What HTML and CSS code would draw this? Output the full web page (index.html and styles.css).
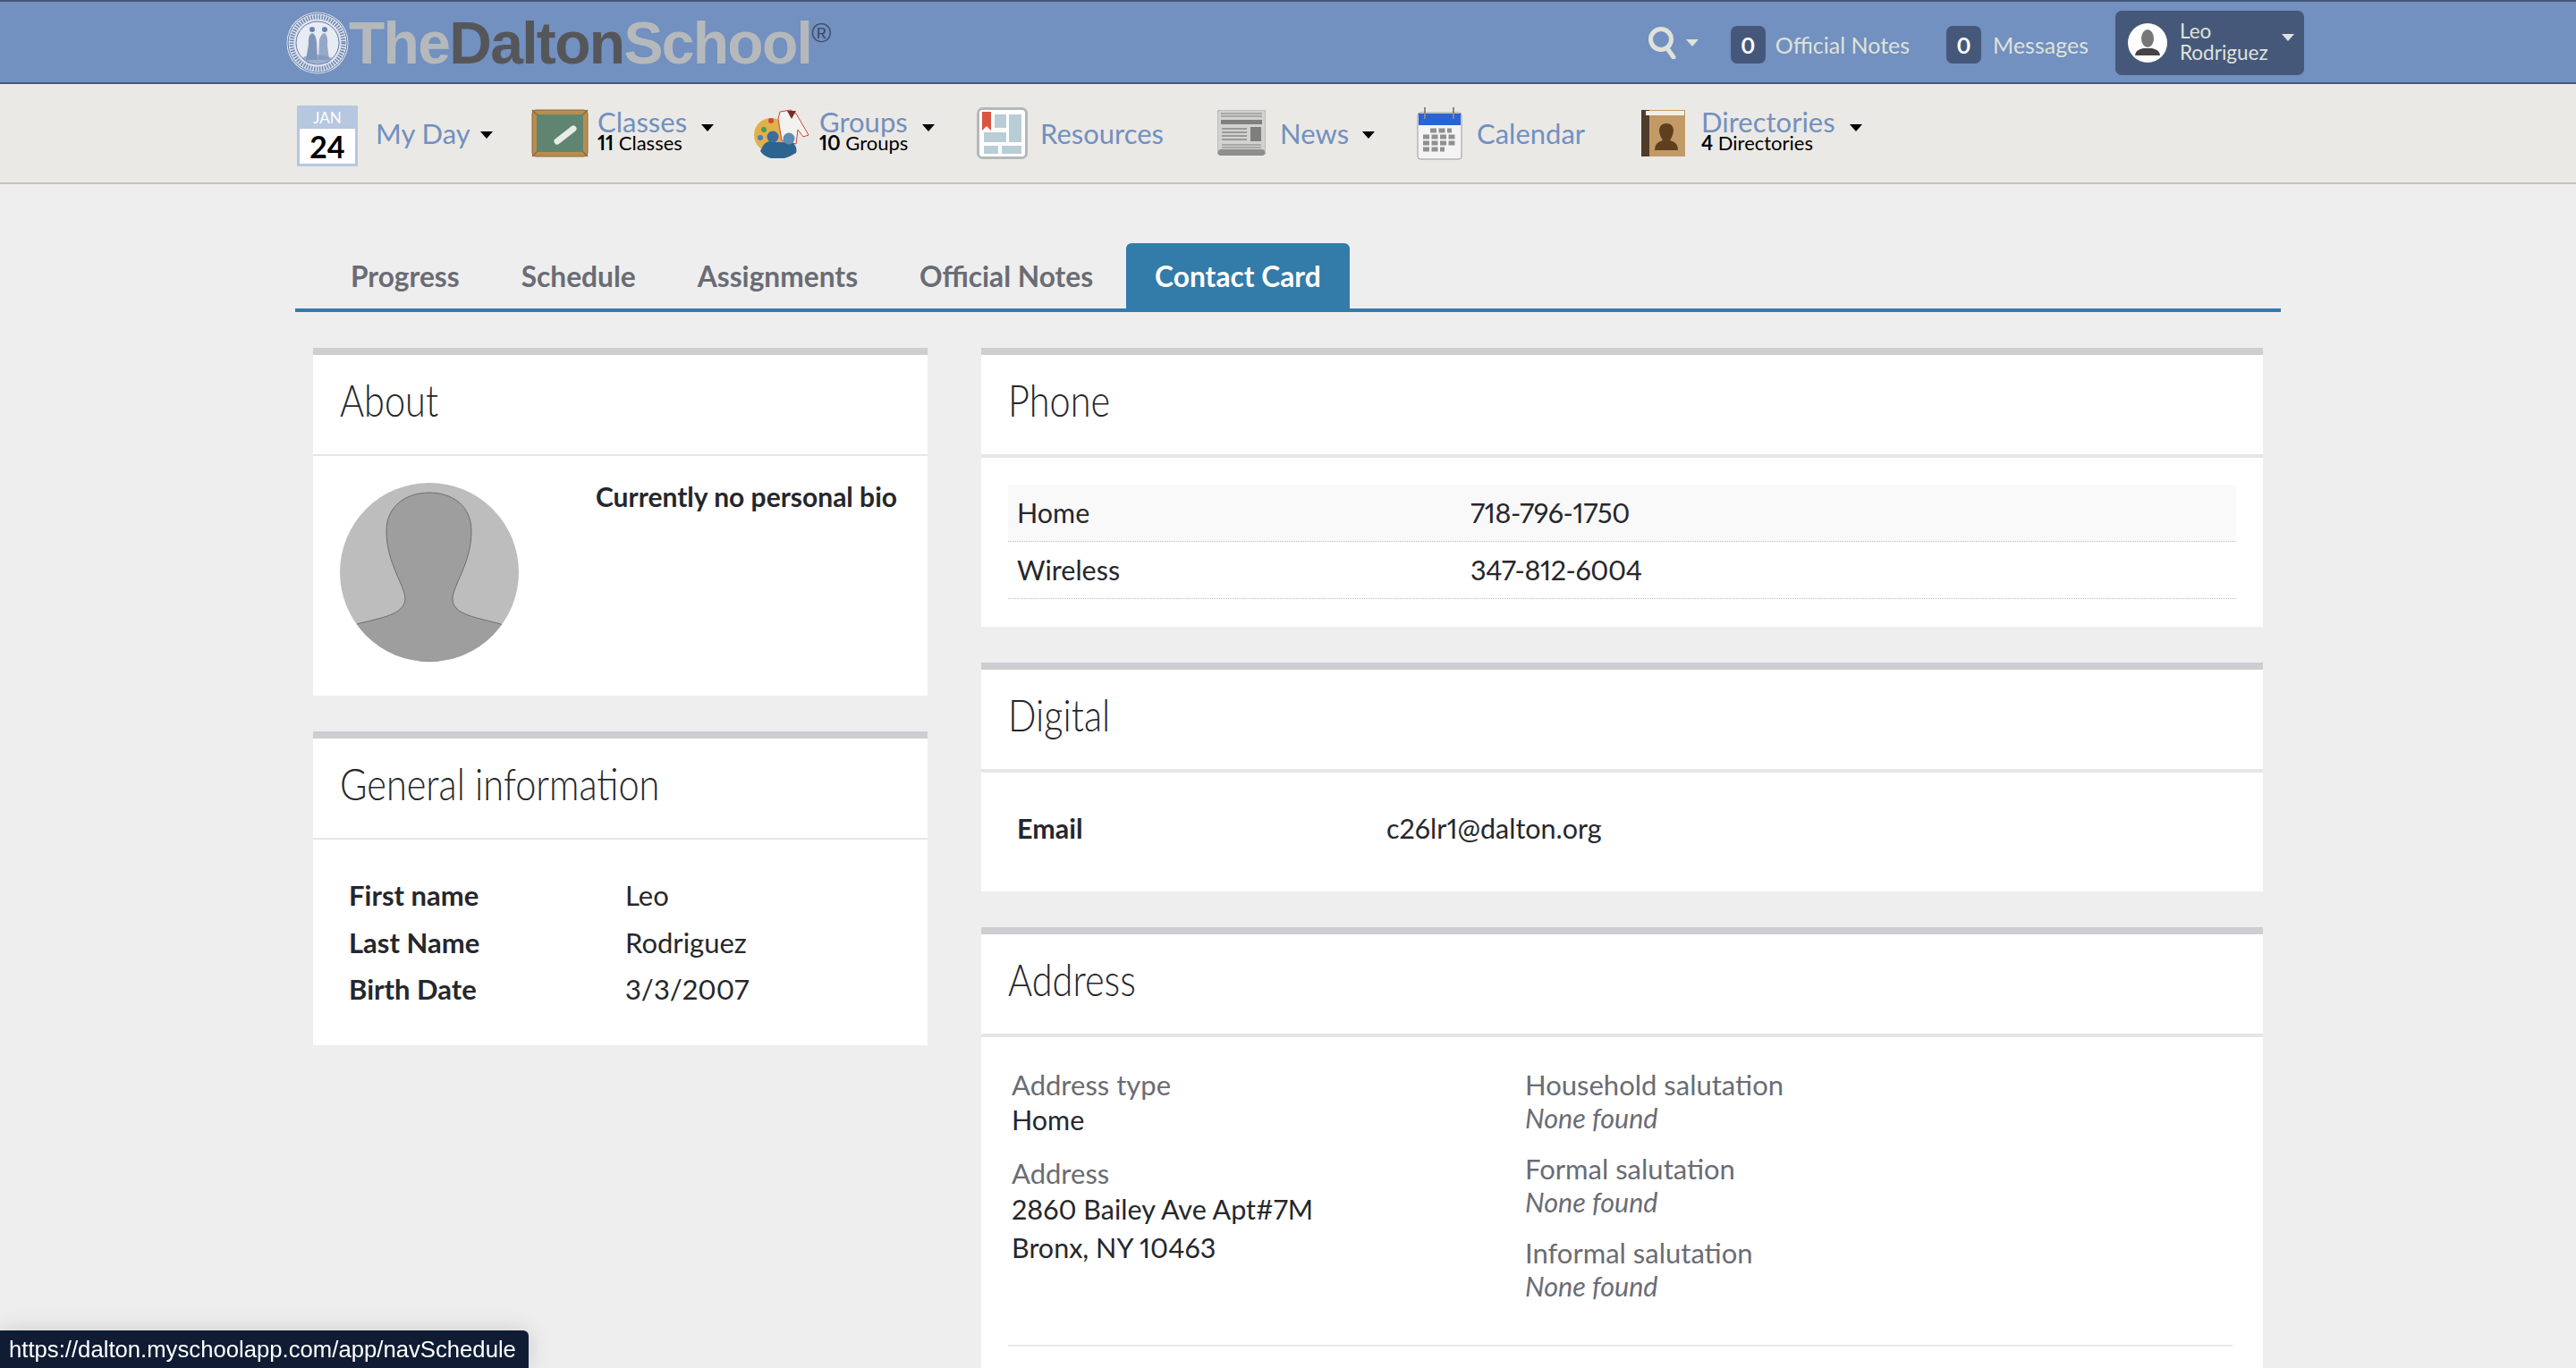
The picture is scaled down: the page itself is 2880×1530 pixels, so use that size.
FILE: index.html
```html
<!doctype html>
<html lang="en">
  <head>
    <meta charset="UTF-8" />
    <title>Contact Card</title>
    <link rel="stylesheet" href="styles.css">
  </head>
  <body>
    <!-- Top bar -->
    <header class="topbar">
      <div class="logo">
        <svg class="seal" viewBox="0 0 70 70">
          <circle cx="35" cy="35" r="34.5" fill="#dfe4ee" />
          <circle cx="35" cy="35" r="33" fill="none" stroke="#5f7aa8" stroke-width="1" />
          <circle cx="35" cy="35" r="29" fill="none" stroke="#6a84ae" stroke-width="5" stroke-dasharray="1.5 1.5" />
          <circle cx="35" cy="35" r="24" fill="#e8ebf2" stroke="#5f7aa8" stroke-width="1" />
          <path d="M22 54 L25 36 Q24 26 29 24 Q33 25 34 34 L35 54 Z" fill="#7f96bb" />
          <path d="M36 54 L37 32 Q39 24 43 24 Q47 27 46 38 L48 54 Z" fill="#95a8c8" />
          <path d="M18 52 Q28 44 52 52 L46 58 L24 58 Z" fill="#7f96bb" opacity="0.7" />
          <circle cx="29" cy="20" r="3" fill="#6a84ae" />
          <circle cx="43" cy="20" r="3" fill="#6a84ae" />
        </svg>
        <span class="logo-word">The<b>Dalton</b>School</span><span class="logo-reg">®</span>
      </div>
      <div class="top-right">
        <svg class="search" viewBox="0 0 32 36">
          <circle cx="14" cy="14" r="11.5" fill="none" stroke="#dfe2da" stroke-width="5" />
          <path d="M21 24 L28 34" stroke="#dfe2da" stroke-width="5" stroke-linecap="round" />
        </svg>
        <span class="caret caret-light search-caret"></span>
        <span class="badge">0</span><span class="top-link notes-link">Official Notes</span>
        <span class="badge">0</span><span class="top-link">Messages</span>
        <div class="user-box">
          <svg class="user-pic" viewBox="0 0 44 44">
            <circle cx="22" cy="22" r="22" fill="#fff" />
            <ellipse cx="22" cy="17" rx="7" ry="10" fill="#777" />
            <path d="M8 36 Q8 30 17 28 L27 28 Q36 30 36 36 Z" fill="#444" />
          </svg>
          <div class="user-name">Leo<br />Rodriguez</div>
          <span class="caret caret-light user-caret"></span>
        </div>
      </div>
    </header>

    <!-- Main nav -->
    <nav class="mainnav">
      <div class="nav-item myday">
        <div class="cal-tile">
          <div class="cal-month">JAN</div>
          <div class="cal-day">24</div>
        </div>
        <span class="nav-label">My Day</span>
        <span class="caret"></span>
      </div>
      <div class="nav-item classes">
        <svg class="nav-icon" width="64" height="54" viewBox="0 0 64 54">
          <rect x="1" y="1" width="62" height="52" rx="4" fill="#b98d4c" stroke="#8f6a3e" />
          <path d="M1 1L7 7M63 1L57 7M1 53L7 47M63 53L57 47" stroke="#8f6a3e" stroke-width="1.5" />
          <rect x="6" y="6" width="52" height="42" fill="#5f8571" />
          <path d="M29 36 L47 22" stroke="#e8ece8" stroke-width="7" stroke-linecap="round" />
        </svg>
        <div class="nav-stack">
          <span class="nav-label">Classes</span>
          <span class="nav-sub"><b>11</b> Classes</span>
        </div>
        <span class="caret"></span>
      </div>
      <div class="nav-item groups">
        <svg class="nav-icon" width="64" height="56" viewBox="0 0 64 56">
          <ellipse cx="20" cy="30" rx="19" ry="19" fill="#e0b04a" />
          <circle cx="12" cy="24" r="3" fill="#4f9a4a" />
          <circle cx="20" cy="14" r="3" fill="#c94b3c" />
          <circle cx="8" cy="33" r="3" fill="#4c7cc0" />
          <path d="M30 4 L42 2 L48 6 L62 30 L56 32 L50 24 L48 40 L32 36 L28 12 Z" fill="#f4f2ee" stroke="#c9453a" />
          <path d="M38 3 L48 3 L43 12 Z" fill="#7a2b26" />
          <path d="M8 48 Q14 34 22 38 L44 38 Q50 44 48 50 Q32 60 20 56 Q12 54 8 48 Z" fill="#2d648f" />
          <circle cx="22" cy="32" r="6.5" fill="#3a6d97" />
          <circle cx="40" cy="34" r="6.5" fill="#5b8db5" />
        </svg>
        <div class="nav-stack">
          <span class="nav-label">Groups</span>
          <span class="nav-sub"><b>10</b> Groups</span>
        </div>
        <span class="caret"></span>
      </div>
      <div class="nav-item resources">
        <svg class="nav-icon" width="57" height="58" viewBox="0 0 57 58">
          <rect x="1.5" y="1.5" width="54" height="55" rx="5" fill="#fff" stroke="#b3b9bb" stroke-width="3" />
          <path d="M6 5H16V26L11 21L6 26Z" fill="#d9553f" />
          <rect x="20" y="8" width="13" height="15" fill="#b9cdd6" />
          <rect x="36" y="8" width="14" height="31" fill="#b9cdd6" />
          <rect x="8" y="28" width="25" height="11" fill="#b9cdd6" />
          <rect x="8" y="43" width="16" height="9" fill="#b9cdd6" />
          <rect x="28" y="43" width="22" height="9" fill="#b9cdd6" />
        </svg>
        <span class="nav-label">Resources</span>
      </div>
      <div class="nav-item news">
        <svg class="nav-icon" width="54" height="52" viewBox="0 0 54 52">
          <rect x="0" y="0" width="54" height="50" rx="3" fill="#d2d2d0" stroke="#a8a8a6" />
          <rect x="4" y="11" width="46" height="5" fill="#7f7f7f" />
          <path d="M5 21H33M5 25H33M5 29H33M5 33H33" stroke="#9a9a98" stroke-width="2" />
          <rect x="37" y="19" width="12" height="16" fill="#7f7f7f" />
          <path d="M4 4H50M4 7H50M5 39H49M5 42H49" stroke="#9a9a98" stroke-width="1.5" />
          <rect x="1" y="44" width="52" height="7" rx="3" fill="#8e8e8c" />
        </svg>
        <span class="nav-label">News</span>
        <span class="caret"></span>
      </div>
      <div class="nav-item calendar">
        <svg class="nav-icon" width="51" height="60" viewBox="0 0 51 60">
          <rect x="1" y="7" width="49" height="52" rx="3" fill="#f4f4f4" stroke="#9a9a9a" />
          <rect x="2" y="8" width="47" height="13" fill="#2a63d6" />
          <path d="M9 1V14M41 1V14" stroke="#888" stroke-width="2" />
          <path d="M15 27h24M7 34h37M7 41h37M7 48h24" stroke="#909090" stroke-width="5" stroke-dasharray="7 2.5" />
        </svg>
        <span class="nav-label">Calendar</span>
      </div>
      <div class="nav-item directories">
        <svg class="nav-icon" width="49" height="52" viewBox="0 0 49 52">
          <rect x="0" y="0" width="49" height="52" fill="#c39a66" />
          <rect x="0" y="0" width="9" height="52" fill="#4e3b2a" />
          <rect x="5" y="1" width="43" height="5" fill="#f3efe6" />
          <path d="M15 45 Q15 36 24 34 Q20 28 20 22 Q21 15 28 15 Q35 15 36 22 Q36 28 32 34 Q41 36 41 45 Z" fill="#5e3f1e" />
        </svg>
        <div class="nav-stack">
          <span class="nav-label">Directories</span>
          <span class="nav-sub"><b>4</b> Directories</span>
        </div>
        <span class="caret"></span>
      </div>
    </nav>

    <main class="content">
      <!-- Tabs -->
      <ul class="tabs">
        <li>Progress</li>
        <li>Schedule</li>
        <li>Assignments</li>
        <li>Official Notes</li>
        <li class="active">Contact Card</li>
      </ul>

      <div class="columns">
        <div class="col col-side">
          <section class="panel">
            <h2><span>About</span></h2>
            <div class="panel-body about-body">
              <svg class="avatar" viewBox="0 0 200 200">
                <defs>
                  <clipPath id="avatar-clip"><circle cx="100" cy="100" r="100" /></clipPath>
                </defs>
                <g clip-path="url(#avatar-clip)">
                  <rect width="200" height="200" fill="#bdbdbd" />
                  <path d="M19 158 C45 151 72 148 73 130 C73 115 52 90 52 54 C52 25 75 11 100 11 C125 11 147 25 147 54 C147 90 126 115 126 130 C126 148 155 151 180 158 L200 200 L0 200 Z" fill="#9e9e9e" stroke="#6e6e6e" stroke-width="1" />
                </g>
              </svg>
              <p class="bio">Currently no personal bio</p>
            </div>
          </section>

          <section class="panel">
            <h2><span>General information</span></h2>
            <div class="panel-body general-body">
              <div class="general-row"><b>First name</b><span>Leo</span></div>
              <div class="general-row"><b>Last Name</b><span>Rodriguez</span></div>
              <div class="general-row"><b>Birth Date</b><span>3/3/2007</span></div>
            </div>
          </section>
        </div>

        <div class="col">
          <section class="panel">
            <h2><span>Phone</span></h2>
            <div class="panel-body phone-body">
              <div class="phone-row shaded"><span>Home</span><span class="phone-number">718-796-1750</span></div>
              <div class="phone-row"><span>Wireless</span><span class="phone-number">347-812-6004</span></div>
            </div>
          </section>

          <section class="panel">
            <h2><span>Digital</span></h2>
            <div class="panel-body digital-body">
              <b>Email</b><span>c26lr1@dalton.org</span>
            </div>
          </section>

          <section class="panel">
            <h2><span>Address</span></h2>
            <div class="panel-body address-body">
              <div class="address-grid">
                <div class="address-left">
                  <div class="field">
                    <div class="field-label">Address type</div>
                    <div class="field-value">Home</div>
                  </div>
                  <div class="field">
                    <div class="field-label">Address</div>
                    <div class="field-value tall">2860 Bailey Ave Apt#7M<br />Bronx, NY 10463</div>
                  </div>
                </div>
                <div>
                  <div class="field">
                    <div class="field-label">Household salutation</div>
                    <div class="field-none">None found</div>
                  </div>
                  <div class="field">
                    <div class="field-label">Formal salutation</div>
                    <div class="field-none">None found</div>
                  </div>
                  <div class="field">
                    <div class="field-label">Informal salutation</div>
                    <div class="field-none">None found</div>
                  </div>
                </div>
              </div>
              <hr class="address-rule" />
            </div>
          </section>
        </div>
      </div>
    </main>

    <!-- Link preview in the corner -->
    <div class="status-link">https://dalton.myschoolapp.com/app/navSchedule</div>
  </body>
</html>
```

FILE: styles.css
```css
html,
body {
  height: 100%;
  margin: 0;
  overflow: hidden;
}
body {
  background-color: #eeeeee;
  color: #26272c;
  font-family: Lato, "Open Sans", Arial, sans-serif;
  font-size: 30.5px;
  font-variant-numeric: proportional-nums;
}
.topbar {
  display: flex;
  align-items: center;
  justify-content: space-between;
  box-sizing: border-box;
  height: 94px;
  padding: 2px 304px 0 320px;
  background-color: #7290c0;
  border-top: 2px solid #46587a;
  border-bottom: 2px solid #46587a;
}
.logo {
  display: flex;
  align-items: center;
}
.seal {
  width: 70px;
  height: 70px;
}
.logo-word {
  font-family: "Liberation Sans", Arial, sans-serif;
  font-size: 66px;
  font-weight: bold;
  letter-spacing: -1.7px;
  color: #b6b9bb;
}
.logo-word b {
  color: #55565a;
}
.logo-reg {
  align-self: flex-start;
  margin-top: 10px;
  font-family: "Liberation Sans", Arial, sans-serif;
  font-size: 30px;
  color: #3f4c66;
}
.top-right {
  display: flex;
  align-items: center;
}
.search {
  width: 32px;
  height: 36px;
}
.caret {
  display: inline-block;
  width: 0;
  height: 0;
  border-left: 7px solid transparent;
  border-right: 7px solid transparent;
  border-top: 8px solid #000;
}
.caret-light {
  border-top-color: #dfe2da;
}
.search-caret {
  margin: 0 36px 0 10px;
}
.badge {
  display: flex;
  align-items: center;
  justify-content: center;
  width: 39px;
  height: 42px;
  margin-top: 4px;
  border-radius: 7px;
  background-color: #46587a;
  color: #fff;
  font-size: 24px;
  font-weight: bold;
}
.top-link {
  margin: 3px 0 0 13px;
  font-size: 25px;
  color: #dfe2da;
}
.notes-link {
  margin-left: 11px;
  margin-right: 41px;
}
.user-box {
  display: flex;
  align-items: center;
  box-sizing: border-box;
  width: 211px;
  height: 72px;
  margin-left: 30px;
  padding: 0 11px 0 14px;
  border-radius: 7px;
  background-color: #46587a;
}
.user-pic {
  width: 44px;
  height: 44px;
  flex-shrink: 0;
}
.user-name {
  flex: 1;
  margin: 0 0 3px 14px;
  font-size: 22.5px;
  line-height: 24px;
  color: #dfe2da;
}
.user-caret {
  margin-bottom: 12px;
}
.mainnav {
  display: flex;
  align-items: center;
  box-sizing: border-box;
  height: 112px;
  padding: 0 0 0 332px;
  background-color: #ebe9e5;
  border-bottom: 2px solid #c9c2b8;
}
.nav-item {
  display: flex;
  align-items: center;
}
.nav-icon {
  flex-shrink: 0;
}
.nav-label {
  color: #7290c0;
  font-size: 31px;
  line-height: 28px;
}
.nav-stack {
  display: flex;
  flex-direction: column;
  margin-left: 10px;
  padding-bottom: 7px;
}
.nav-sub {
  font-size: 22px;
  line-height: 20px;
  color: #000;
}
.nav-item > .nav-label {
  margin-left: 16px;
}
.resources > .nav-label {
  margin-left: 14px;
}
.nav-item > .caret {
  margin: 3px 0 0 15px;
}
.myday > .caret {
  margin-left: 11px;
}
.myday {
  width: 262px;
}
.classes {
  width: 248px;
}
.groups {
  width: 250px;
}
.resources {
  width: 269px;
}
.news {
  width: 223px;
}
.calendar {
  width: 251px;
}
.directories .nav-stack {
  margin-left: 18px;
}
.nav-item > .nav-stack + .caret {
  margin: 0 0 12px 16px;
}
.cal-tile {
  box-sizing: border-box;
  width: 68px;
  height: 68px;
  margin: 6px 4px 0 0;
  border: 3px solid #b6c7e0;
  border-top: 0;
  background-color: #fff;
  text-align: center;
}
.cal-month {
  margin: 0 -3px;
  height: 26px;
  background-color: #b6c7e0;
  color: #fff;
  font-size: 17px;
  line-height: 28px;
}
.cal-day {
  font-size: 34px;
  font-weight: bold;
  line-height: 39px;
  color: #000;
}
.content {
  box-sizing: border-box;
  width: 2220px;
  margin-left: 330px;
}
.tabs {
  display: flex;
  gap: 5px;
  margin: 66px 0 0;
  padding: 0 0 0 30px;
  list-style: none;
  border-bottom: 4px solid #337ba8;
}
.tabs li {
  display: flex;
  align-items: center;
  height: 73px;
  padding: 0 32px;
  border-radius: 6px 6px 0 0;
  font-size: 31.7px;
  font-weight: bold;
  color: #6a6c74;
}
.tabs .active {
  background-color: #337ba8;
  color: #fff;
}
.columns {
  display: grid;
  grid-template-columns: 687px 1433px;
  gap: 60px;
  margin: 40px 20px 0;
}
.panel {
  margin-bottom: 40px;
  background-color: #fff;
  border-top: 8px solid #cdced1;
}
.panel h2 {
  box-sizing: border-box;
  height: 115px;
  margin: 0;
  padding: 0 30px;
  border-bottom: 4px solid #e5e6e8;
  font-size: 50px;
  font-weight: 300;
  line-height: 101px;
  color: #26272c;
}
/* headings in the reference are narrower than Lato Light */
.panel h2 span {
  display: inline-block;
  transform: scaleX(0.83);
  transform-origin: left center;
}
.col-side h2 {
  height: 113px;
  border-bottom-width: 2px;
}
.about-body {
  display: flex;
  height: 268px;
  box-sizing: border-box;
  padding: 30px;
}
.avatar {
  width: 200px;
  height: 200px;
  flex-shrink: 0;
}
.bio {
  margin: 0 4px 0 auto;
  font-size: 30px;
  font-weight: bold;
  line-height: 30px;
}
.general-body {
  padding: 36px 40px 36px;
  font-size: 31px;
}
.general-row {
  display: flex;
  height: 52.5px;
  align-items: center;
}
.general-row b {
  width: 309px;
}
.phone-body {
  padding: 30px 30px 31px;
}
.phone-row {
  display: flex;
  align-items: center;
  box-sizing: border-box;
  height: 64px;
  padding: 0 10px 2px;
  border-bottom: 1px dotted #bbb;
}
.phone-row span:first-child {
  width: 507px;
}
.phone-number {
  letter-spacing: -0.4px;
}
.shaded {
  background-color: #f9f9f9;
}
.digital-body {
  display: flex;
  align-items: center;
  box-sizing: border-box;
  height: 133px;
  padding: 0 40px 10px;
}
.digital-body b {
  width: 413px;
}
.address-body {
  padding: 35px 34px 60px;
}
.address-grid {
  display: grid;
  grid-template-columns: 574px 1fr;
}
.field {
  margin-bottom: 20px;
}
.address-left .field {
  margin-bottom: 22px;
}
.field-label {
  font-size: 31px;
  line-height: 37px;
  color: #6a6c74;
}
.field-value {
  line-height: 40px;
}
.tall {
  line-height: 43px;
}
.field-none {
  font-style: italic;
  line-height: 37px;
  color: #6a6c74;
}
.address-rule {
  margin: 27px 0 0 -4px;
  border: 0;
  border-top: 2px solid #e8e9ea;
}
.status-link {
  position: fixed;
  left: 0;
  bottom: 0;
  box-sizing: border-box;
  width: 591px;
  height: 42px;
  padding-left: 10px;
  border-radius: 0 6px 0 0;
  background-color: #0f1c33;
  box-shadow: 0 0 24px rgba(0, 0, 0, 0.15);
  color: #fff;
  font-family: "Liberation Sans", Arial, sans-serif;
  font-size: 25.7px;
  line-height: 42px;
}
```
